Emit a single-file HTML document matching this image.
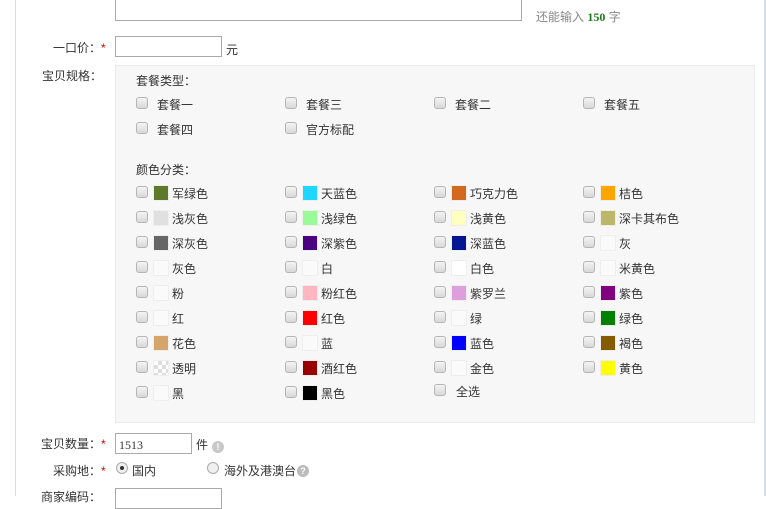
<!DOCTYPE html>
<html><head><meta charset="utf-8"><style>
*{margin:0;padding:0;box-sizing:border-box}
body{width:766px;height:496px;overflow:hidden;background:#fff;font:12px "Liberation Sans","Noto Sans CJK SC",sans-serif;color:#333;position:relative}
.a{position:absolute;white-space:nowrap;line-height:16px}
.cb{position:absolute;width:12px;height:12px;border:1px solid #b5b5b5;border-radius:3px;background:linear-gradient(#f4f4f4,#d8d8d8)}
.sw{position:absolute;width:16px;height:16px;border:1px solid #eee;background:#fafafa}
.in{position:absolute;border:1px solid #aaa;background:#fff}
.st{color:#d00}
</style></head><body>
<div style="position:absolute;left:15px;top:0;width:1px;height:496px;background:#cfe0ee"></div>
<div style="position:absolute;left:764px;top:0;width:2px;height:496px;background:#cfe0ee"></div>
<div class="in" style="left:115px;top:-5px;width:407px;height:26px"></div>
<div class="a" style="left:536px;top:9px;color:#888">还能输入 <b style="color:#1a7a1a;font-family:'Liberation Serif',serif">150</b> 字</div>

<div class="a" style="left:53px;top:40px">一口价：<span class="st">*</span></div>
<div class="in" style="left:115px;top:36px;width:107px;height:21px"></div>
<div class="a" style="left:226px;top:42px">元</div>

<div class="a" style="left:42px;top:68px">宝贝规格：</div>
<div style="position:absolute;left:115px;top:65px;width:640px;height:358px;background:#f7f7f7;border:1px solid #ebebeb"></div>
<div class="a" style="left:136px;top:73px">套餐类型：</div>
<div class="cb" style="left:136px;top:97px"></div><div class="a" style="left:157px;top:97px">套餐一</div>
<div class="cb" style="left:285px;top:97px"></div><div class="a" style="left:306px;top:97px">套餐三</div>
<div class="cb" style="left:434px;top:97px"></div><div class="a" style="left:455px;top:97px">套餐二</div>
<div class="cb" style="left:583px;top:97px"></div><div class="a" style="left:604px;top:97px">套餐五</div>
<div class="cb" style="left:136px;top:122px"></div><div class="a" style="left:157px;top:122px">套餐四</div>
<div class="cb" style="left:285px;top:122px"></div><div class="a" style="left:306px;top:122px">官方标配</div>
<div class="a" style="left:136px;top:162px">颜色分类：</div>

<!-- row 1 y=193 -->
<div class="cb" style="left:136px;top:186px"></div><div class="sw" style="left:153px;top:185px;background:#5b7a2a"></div><div class="a" style="left:172px;top:186px">军绿色</div>
<div class="cb" style="left:285px;top:186px"></div><div class="sw" style="left:302px;top:185px;background:#1ed6ff"></div><div class="a" style="left:321px;top:186px">天蓝色</div>
<div class="cb" style="left:434px;top:186px"></div><div class="sw" style="left:451px;top:185px;background:#d2691e"></div><div class="a" style="left:470px;top:186px">巧克力色</div>
<div class="cb" style="left:583px;top:186px"></div><div class="sw" style="left:600px;top:185px;background:#ffa500"></div><div class="a" style="left:619px;top:186px">桔色</div>
<!-- row 2 -->
<div class="cb" style="left:136px;top:211px"></div><div class="sw" style="left:153px;top:210px;background:#e0e0e0"></div><div class="a" style="left:172px;top:211px">浅灰色</div>
<div class="cb" style="left:285px;top:211px"></div><div class="sw" style="left:302px;top:210px;background:#98fb98"></div><div class="a" style="left:321px;top:211px">浅绿色</div>
<div class="cb" style="left:434px;top:211px"></div><div class="sw" style="left:451px;top:210px;background:#ffffc0"></div><div class="a" style="left:470px;top:211px">浅黄色</div>
<div class="cb" style="left:583px;top:211px"></div><div class="sw" style="left:600px;top:210px;background:#bdb76b"></div><div class="a" style="left:619px;top:211px">深卡其布色</div>
<!-- row 3 -->
<div class="cb" style="left:136px;top:236px"></div><div class="sw" style="left:153px;top:235px;background:#666"></div><div class="a" style="left:172px;top:236px">深灰色</div>
<div class="cb" style="left:285px;top:236px"></div><div class="sw" style="left:302px;top:235px;background:#4b0082"></div><div class="a" style="left:321px;top:236px">深紫色</div>
<div class="cb" style="left:434px;top:236px"></div><div class="sw" style="left:451px;top:235px;background:#041690"></div><div class="a" style="left:470px;top:236px">深蓝色</div>
<div class="cb" style="left:583px;top:236px"></div><div class="sw" style="left:600px;top:235px"></div><div class="a" style="left:619px;top:236px">灰</div>
<!-- row 4 -->
<div class="cb" style="left:136px;top:261px"></div><div class="sw" style="left:153px;top:260px"></div><div class="a" style="left:172px;top:261px">灰色</div>
<div class="cb" style="left:285px;top:261px"></div><div class="sw" style="left:302px;top:260px"></div><div class="a" style="left:321px;top:261px">白</div>
<div class="cb" style="left:434px;top:261px"></div><div class="sw" style="left:451px;top:260px;background:#fff"></div><div class="a" style="left:470px;top:261px">白色</div>
<div class="cb" style="left:583px;top:261px"></div><div class="sw" style="left:600px;top:260px"></div><div class="a" style="left:619px;top:261px">米黄色</div>
<!-- row 5 -->
<div class="cb" style="left:136px;top:286px"></div><div class="sw" style="left:153px;top:285px"></div><div class="a" style="left:172px;top:286px">粉</div>
<div class="cb" style="left:285px;top:286px"></div><div class="sw" style="left:302px;top:285px;background:#ffb6c1"></div><div class="a" style="left:321px;top:286px">粉红色</div>
<div class="cb" style="left:434px;top:286px"></div><div class="sw" style="left:451px;top:285px;background:#dda0dd"></div><div class="a" style="left:470px;top:286px">紫罗兰</div>
<div class="cb" style="left:583px;top:286px"></div><div class="sw" style="left:600px;top:285px;background:#800080"></div><div class="a" style="left:619px;top:286px">紫色</div>
<!-- row 6 -->
<div class="cb" style="left:136px;top:311px"></div><div class="sw" style="left:153px;top:310px"></div><div class="a" style="left:172px;top:311px">红</div>
<div class="cb" style="left:285px;top:311px"></div><div class="sw" style="left:302px;top:310px;background:#f00"></div><div class="a" style="left:321px;top:311px">红色</div>
<div class="cb" style="left:434px;top:311px"></div><div class="sw" style="left:451px;top:310px"></div><div class="a" style="left:470px;top:311px">绿</div>
<div class="cb" style="left:583px;top:311px"></div><div class="sw" style="left:600px;top:310px;background:#008000"></div><div class="a" style="left:619px;top:311px">绿色</div>
<!-- row 7 -->
<div class="cb" style="left:136px;top:336px"></div><div class="sw" style="left:153px;top:335px;background:#d4a46a"></div><div class="a" style="left:172px;top:336px">花色</div>
<div class="cb" style="left:285px;top:336px"></div><div class="sw" style="left:302px;top:335px"></div><div class="a" style="left:321px;top:336px">蓝</div>
<div class="cb" style="left:434px;top:336px"></div><div class="sw" style="left:451px;top:335px;background:#00f"></div><div class="a" style="left:470px;top:336px">蓝色</div>
<div class="cb" style="left:583px;top:336px"></div><div class="sw" style="left:600px;top:335px;background:#855b00"></div><div class="a" style="left:619px;top:336px">褐色</div>
<!-- row 8 -->
<div class="cb" style="left:136px;top:361px"></div><div class="sw" style="left:153px;top:360px;background:repeating-conic-gradient(#ddd 0 25%,#fff 0 50%) 0 0/8px 8px"></div><div class="a" style="left:172px;top:361px">透明</div>
<div class="cb" style="left:285px;top:361px"></div><div class="sw" style="left:302px;top:360px;background:#900"></div><div class="a" style="left:321px;top:361px">酒红色</div>
<div class="cb" style="left:434px;top:361px"></div><div class="sw" style="left:451px;top:360px"></div><div class="a" style="left:470px;top:361px">金色</div>
<div class="cb" style="left:583px;top:361px"></div><div class="sw" style="left:600px;top:360px;background:#ff0"></div><div class="a" style="left:619px;top:361px">黄色</div>
<!-- row 9 -->
<div class="cb" style="left:136px;top:386px"></div><div class="sw" style="left:153px;top:385px"></div><div class="a" style="left:172px;top:386px">黑</div>
<div class="cb" style="left:285px;top:386px"></div><div class="sw" style="left:302px;top:385px;background:#000"></div><div class="a" style="left:321px;top:386px">黑色</div>
<div class="cb" style="left:434px;top:384px"></div><div class="a" style="left:456px;top:384px">全选</div>

<div class="a" style="left:41px;top:436px">宝贝数量：<span class="st">*</span></div>
<div class="in" style="left:115px;top:433px;width:77px;height:21px"></div>
<div class="a" style="left:119px;top:437px;font-family:'Liberation Serif',serif">1513</div>
<div class="a" style="left:196px;top:437px">件</div>
<div style="position:absolute;left:212px;top:441px;width:12px;height:12px;border-radius:50%;background:#c8c8c8;color:#fff;font:bold 9px/12px 'Liberation Sans',sans-serif;text-align:center">!</div>

<div class="a" style="left:53px;top:463px">采购地：<span class="st">*</span></div>
<div style="position:absolute;left:116px;top:462px;width:12px;height:12px;border-radius:50%;border:1px solid #aaa;background:#f0f0f0"><div style="position:absolute;left:3px;top:3px;width:4px;height:4px;border-radius:50%;background:#333"></div></div>
<div class="a" style="left:132px;top:463px">国内</div>
<div style="position:absolute;left:207px;top:462px;width:12px;height:12px;border-radius:50%;border:1px solid #aaa;background:#f0f0f0"></div>
<div class="a" style="left:224px;top:463px">海外及港澳台</div>
<div style="position:absolute;left:297px;top:465px;width:12px;height:12px;border-radius:50%;background:#bbb;color:#fff;font:bold 9px/12px 'Liberation Sans',sans-serif;text-align:center">?</div>

<div class="a" style="left:41px;top:489px">商家编码：</div>
<div class="in" style="left:115px;top:488px;width:107px;height:21px"></div>
</body></html>
